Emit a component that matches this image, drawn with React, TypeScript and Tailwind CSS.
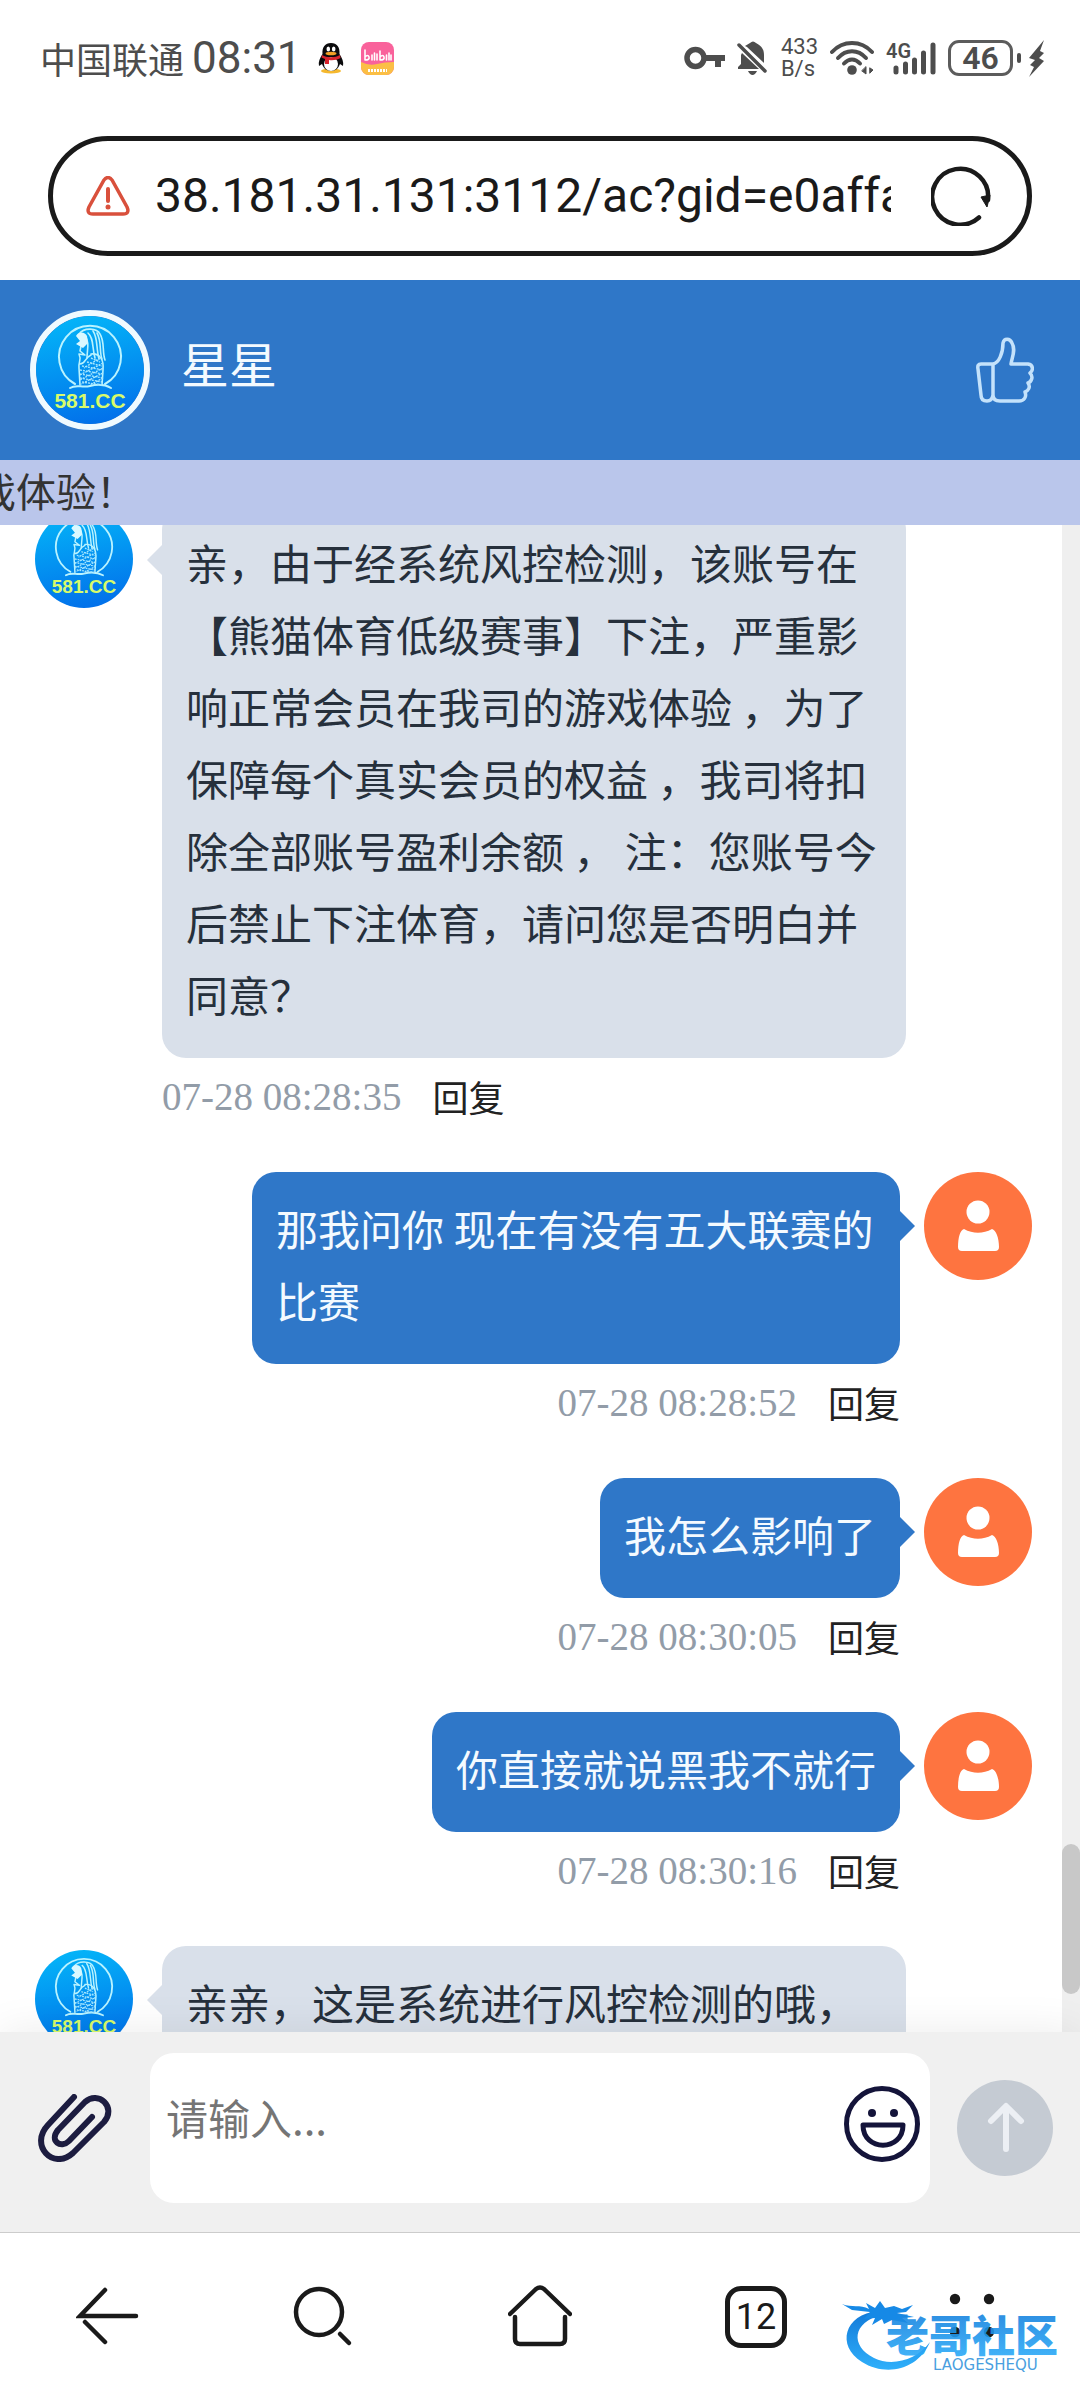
import { useId } from 'react';

type Message = {
  from: 'service' | 'me';
  text: string;
  time: string;
};

const messages: Message[] = [
  {
    from: 'service',
    text: '亲，由于经系统风控检测，该账号在【熊猫体育低级赛事】下注，严重影响正常会员在我司的游戏体验 ，为了保障每个真实会员的权益 ，我司将扣除全部账号盈利余额 ， 注：您账号今后禁止下注体育，请问您是否明白并同意？',
    time: '07-28 08:28:35',
  },
  { from: 'me', text: '那我问你 现在有没有五大联赛的比赛', time: '07-28 08:28:52' },
  { from: 'me', text: '我怎么影响了', time: '07-28 08:30:05' },
  { from: 'me', text: '你直接就说黑我不就行', time: '07-28 08:30:16' },
  { from: 'service', text: '亲亲，这是系统进行风控检测的哦，', time: '07-28 08:31:02' },
];

/* Merlion badge used as the service avatar */
const ServiceLogo = ({ className }: { className: string }) => {
  const id = useId();
  return (
    <svg viewBox="0 0 108 108" className={className} aria-hidden="true">
      <defs>
        <linearGradient id={id} x1="0.4" y1="0" x2="0.6" y2="1">
          <stop offset="0" stopColor="#04b4f8" />
          <stop offset="1" stopColor="#0270ea" />
        </linearGradient>
      </defs>
      <circle cx="54" cy="54" r="54" fill={`url(#${id})`} />
      <g fill="none" stroke="#b9f3ff" strokeWidth="1.6" strokeLinecap="round" strokeLinejoin="round">
        <path d="M39 68A31 31 0 1 1 69 68" strokeWidth="2" />
        <path d="M34 72C40 68 46 72 54 70S68 68 75 72" strokeWidth="2" />
        <path d="M43 18C48 11 61 12 64 18C69 26 66 36 69 44M52 17C58 22 56 32 59 42M57 15C62 22 60 32 63 43M49 20C54 27 51 33 51 42M61 17C66 26 63 35 66 43" />
        <path d="M45 30L44 35L49 39L43 38C46 44 42 46 43 52L44 69M55 38C64 37 68 44 67 54L66 69M44 48C50 48 48 42 55 39" />
      </g>
      <path d="M40 20C43 15 49 16 51 20L52 27L47 32L40 28L44 25Z" fill="#d9f8ff" />
      <path
        d="M55 42L64 46M51 46L66 50M46 50L67 54M44 54L67 58M44 58L67 62M44 62L66 66M46 66L66 69M64 42L48 52M67 47L44 59M67 52L44 64M67 57L45 68M67 62L54 69"
        fill="none"
        stroke="#a5e6ff"
        strokeWidth="1.4"
        strokeDasharray="2 1"
      />
      <text
        x="54"
        y="92"
        textAnchor="middle"
        fill="#d8fb6a"
        fontSize="21"
        fontWeight="700"
        fontFamily="'Liberation Sans', sans-serif"
      >
        581.CC
      </text>
    </svg>
  );
};

const UserAvatar = () => (
  <svg viewBox="0 0 108 108" className="size-[108px] shrink-0" aria-hidden="true">
    <circle cx="54" cy="54" r="54" fill="#fe7440" />
    <circle cx="54" cy="40" r="11.5" fill="#fff" />
    <path d="M40 57C49 62 59 62 68 57C72 58 75 66 75 75Q75 79 71 79H38Q34 79 34 75C34 66 36 58 40 57Z" fill="#fff" />
  </svg>
);

const StatusBar = () => (
  <div className="flex h-[116px] shrink-0 items-center justify-between pr-9 pl-10 text-[#4d4d4d]">
    <div className="flex items-center">
      <span className="text-[36px]">中国联通</span>
      <span className="ml-2 font-['Roboto'] text-[44px]">08:31</span>
      {/* QQ penguin */}
      <svg viewBox="0 0 26 32" className="ml-4 h-8 w-[26px]" aria-hidden="true">
        <ellipse cx="13" cy="29" rx="10" ry="2.5" fill="#f5b82e" />
        <path d="M13 1C7 1 4 5 4.500 12C2 16 0 20 1 24L4 22C6 27 9 29 13 29S20 27 22 22L25 24C26 20 24 16 21.500 12C22 5 19 1 13 1Z" fill="#0b0b0d" />
        <ellipse cx="13" cy="22" rx="7" ry="7" fill="#fff" />
        <ellipse cx="10.300" cy="7" rx="1.800" ry="2.500" fill="#fff" />
        <ellipse cx="15.700" cy="7" rx="1.800" ry="2.500" fill="#fff" />
        <ellipse cx="13" cy="11.500" rx="5.500" ry="1.800" fill="#f3a126" />
        <path d="M4 13C9 16 17 16 22 13L22.500 16C19 18 15 18.500 11 18V22H7V17L3.500 15.500Z" fill="#d8242e" />
      </svg>
      <svg viewBox="0 0 33 33" className="ml-[17px] size-[33px]" aria-hidden="true">
        <defs>
          <clipPath id="app-clip">
            <rect width="33" height="33" rx="8" />
          </clipPath>
        </defs>
        <g clipPath="url(#app-clip)">
          <rect width="33" height="33" fill="#f9629b" />
          <path d="M0 20Q8 24 16 22T33 20V33H0Z" fill="#fbbf45" />
          <g fill="none" stroke="#fff" strokeWidth="1.600" strokeLinecap="round">
            <path d="M4 8V18M4 15Q7 12 8 15T4 18M11 13V18M13.500 11V18M16 12V18M19 9V18M19 15Q22 12 23 15T19 18M25.500 13V18M28 11V18M30 13V18" />
          </g>
          <path d="M7 28.500H26" stroke="#fff" strokeWidth="3" strokeDasharray="2 1" />
        </g>
      </svg>
    </div>

    <div className="flex items-center">
      {/* VPN key */}
      <svg viewBox="0 0 41 24" className="h-6 w-[41px]" fill="none" stroke="#4d4d4d" aria-hidden="true">
        <circle cx="11.500" cy="12" r="8.500" strokeWidth="5.500" />
        <path d="M20 12H41M34 12V21" strokeWidth="6" />
      </svg>
      {/* muted bell */}
      <svg viewBox="0 0 30 34" className="ml-3 h-[34px] w-[30px]" aria-hidden="true">
        <path d="M5 12L22 28H1V26L4 23V14ZM8 5L13 2Q16-1 19 2C25 5 27 9 27 14V22L10 6Z" fill="#4d4d4d" />
        <path d="M11 30H20Q18 34 15.500 34T11 30Z" fill="#4d4d4d" />
        <path d="M2 4L28 30" stroke="#4d4d4d" strokeWidth="3.500" strokeLinecap="round" />
      </svg>
      <div className="ml-[14px] flex flex-col font-['Roboto'] text-[22px] leading-[22px]">
        <span>433</span>
        <span>B/s</span>
      </div>
      <svg viewBox="0 0 44 34" className="ml-3 h-[34px] w-11" fill="none" stroke="#4d4d4d" strokeLinecap="round" aria-hidden="true">
        <path d="M2 11C13-1 31-1 42 11" strokeWidth="4" />
        <path d="M8 17C16 8 28 8 36 17" strokeWidth="4" />
        <path d="M14 22.500C19 17 25 17 30 22.500" strokeWidth="4" />
        <circle cx="22" cy="29" r="4.800" fill="#4d4d4d" stroke="none" />
        <path d="M36 26V33L32 30ZM40 27L43 29L40 32Z" fill="#4d4d4d" strokeWidth="1" />
      </svg>
      <svg viewBox="0 0 52 36" className="ml-3 h-9 w-[52px] overflow-visible" fill="none" stroke="#4d4d4d" strokeLinecap="round" aria-hidden="true">
        <text x="0" y="18" fill="#4d4d4d" stroke="none" fontSize="20" fontWeight="600" fontFamily="Roboto, sans-serif">4G</text>
        <path d="M10 28V32M19.500 24V32M28.500 20V32M37.500 13V32M47 5V32" strokeWidth="5" />
      </svg>
      <div className="ml-[10px] flex h-9 w-[65px] items-center justify-center rounded-[11px] border-[3px] border-[#5c5c5c] font-['Roboto'] text-[32px] leading-8 font-semibold">
        46
      </div>
      <div className="ml-1 h-[10px] w-1 rounded-full bg-[#4d4d4d]" />
      <svg viewBox="0 0 15 37" className="ml-2 h-[37px] w-[15px]" fill="#4d4d4d" aria-hidden="true">
        <path d="M15 0L0 18L6 20L1 25L5 27L0 37L15 21L10 18L15 13L11 11Z" />
      </svg>
    </div>
  </div>
);

const AddressBar = () => (
  <form className="mx-12 mt-5 mb-6 flex h-[120px] shrink-0 items-center rounded-full border-[5px] border-[#1a1a1a] pr-9 pl-[33px]">
    <svg viewBox="0 0 44 40" className="h-10 w-11 shrink-0" fill="none" stroke="#d9503c" aria-hidden="true">
      <path d="M18 4Q22-1 26 4L41 31Q44 38 37 38H7Q0 38 3 31Z" strokeWidth="3.500" />
      <path d="M22 13V25" strokeWidth="4" strokeLinecap="round" />
      <circle cx="22" cy="31" r="2.500" fill="#d9503c" stroke="none" />
    </svg>
    <input
      aria-label="网址"
      defaultValue="38.181.31.131:3112/ac?gid=e0affa81"
      className="ml-[25px] min-w-0 flex-1 bg-transparent font-['Roboto'] text-[48px] text-[#1a1a1a] outline-none"
    />
    <button type="button" aria-label="刷新" className="ml-10 shrink-0">
      <svg viewBox="0 0 60 60" className="size-[60px]" fill="none" stroke="#1a1a1a" aria-hidden="true">
        <path d="M48 51.500A28 28 0 1 1 57 34" strokeWidth="4.500" strokeLinecap="round" />
        <path d="M50 31L59 29L56 41Z" fill="#1a1a1a" strokeWidth="1" />
      </svg>
    </button>
  </form>
);

const Bubble = ({ message }: { message: Message }) => {
  const mine = message.from === 'me';
  return (
    <li className={mine ? 'flex items-start justify-end gap-6 pr-[30px]' : 'flex items-start gap-[29px] pl-[35px]'}>
      {!mine && <ServiceLogo className="mt-1 size-[98px] shrink-0" />}
      <div className={mine ? 'flex flex-col items-end' : 'flex flex-col items-start'}>
        <div
          className={
            mine
              ? 'relative max-w-[648px] rounded-3xl bg-[#2f77c8] px-6 pt-5 pb-7 text-[42px] leading-[72px] text-[#f4faff]'
              : 'relative w-[744px] rounded-3xl bg-[#d9e0ea] px-6 pt-5 pb-7 text-[42px] leading-[72px] text-[#26303c]'
          }
        >
          {/* bubble tail */}
          <svg
            viewBox="0 0 15 30"
            className={mine ? 'absolute top-[39px] left-full h-[30px] w-[15px]' : 'absolute top-[39px] right-full h-[30px] w-[15px]'}
            aria-hidden="true"
          >
            {mine ? <path d="M0 0L15 15L0 30Z" fill="#2f77c8" /> : <path d="M15 0L0 15L15 30Z" fill="#d9e0ea" />}
          </svg>
          {message.text}
        </div>
        <div className="flex h-[78px] items-center gap-[31px]">
          <time className="font-['Liberation_Serif'] text-[39px] text-[#929ca8]">{message.time}</time>
          <button type="button" className="pb-[2px] text-[36px] text-[#222]">
            回复
          </button>
        </div>
      </div>
      {mine && <UserAvatar />}
    </li>
  );
};

const Composer = () => (
  <form className="relative flex h-[200px] shrink-0 items-center bg-[#f0f0f0] pr-[27px] pb-2 pl-[38px] shadow-[0_0_40px_rgba(0,0,0,0.08)]">
    <button type="button" aria-label="附件" className="shrink-0">
      <svg viewBox="0 0 74 68" className="h-[68px] w-[74px]" fill="none" stroke="#1c1c40" strokeWidth="6" strokeLinecap="round" strokeLinejoin="round" aria-hidden="true">
        <path d="M36 3L10 31C-9 51 15 77 35 59L66 28C79 13 60-4 47 8L20 36C11 47 23 55 31 47L54 23" />
      </svg>
    </button>
    <div className="ml-[38px] flex h-[150px] flex-1 items-center rounded-3xl bg-white pr-[10px] pb-2 pl-4">
      <input
        aria-label="消息"
        placeholder="请输入..."
        className="min-w-0 flex-1 bg-transparent pb-4 text-[42px] outline-none placeholder:text-[#757575]"
      />
      <button type="button" aria-label="表情" className="shrink-0">
        <svg viewBox="0 0 76 76" className="size-[76px]" fill="none" stroke="#14143a" strokeWidth="5" aria-hidden="true">
          <circle cx="38" cy="38" r="35.500" />
          <circle cx="28" cy="27" r="4" fill="#14143a" stroke="none" />
          <circle cx="50" cy="27" r="4" fill="#14143a" stroke="none" />
          <path d="M19 39H59C59 66 19 66 19 39Z" strokeLinejoin="round" />
        </svg>
      </button>
    </div>
    <button type="submit" aria-label="发送" className="ml-[27px] shrink-0">
      <svg viewBox="0 0 96 96" className="size-24" aria-hidden="true">
        <circle cx="48" cy="48" r="48" fill="#c5cbd3" />
        <path d="M49 69V27M34 41L49 26L64 41" fill="none" stroke="#eceff4" strokeWidth="6" strokeLinecap="round" strokeLinejoin="round" />
      </svg>
    </button>
  </form>
);

const BrowserNav = () => (
  <nav className="relative grid h-[168px] shrink-0 grid-cols-5 items-center justify-items-center border-t border-[#ccc] bg-white">
    <button type="button" aria-label="返回">
      <svg viewBox="0 0 64 64" className="size-16" fill="none" stroke="#1a1a1a" strokeWidth="4.500" strokeLinecap="round" aria-hidden="true">
        <path d="M29 5L4 31H60M9 37L29 57" />
      </svg>
    </button>
    <button type="button" aria-label="搜索">
      <svg viewBox="0 0 64 64" className="size-16" fill="none" stroke="#1a1a1a" strokeWidth="4.500" strokeLinecap="round" aria-hidden="true">
        <circle cx="27" cy="27" r="23" />
        <path d="M48 49L57 58" />
      </svg>
    </button>
    <button type="button" aria-label="主页">
      <svg viewBox="0 0 64 64" className="size-16" fill="none" stroke="#1a1a1a" strokeWidth="4.500" strokeLinecap="round" strokeLinejoin="round" aria-hidden="true">
        <path d="M2 29L28 4Q32 1 36 4L62 29M7 32V54Q7 59 12 59H52Q57 59 57 54V32" />
      </svg>
    </button>
    <button type="button" aria-label="标签页" className="flex size-[62px] items-center justify-center rounded-2xl border-[5px] border-[#1a1a1a] font-['Roboto'] text-[36px] text-[#1a1a1a]">
      12
    </button>
    <button type="button" aria-label="菜单">
      <svg viewBox="0 0 64 64" className="size-16" fill="#1a1a1a" aria-hidden="true">
        <circle cx="15" cy="14" r="5.200" />
        <circle cx="49" cy="14" r="5.200" />
        <circle cx="15" cy="47" r="5.200" />
        <circle cx="49" cy="47" r="5.200" />
      </svg>
    </button>

    {/* community logo laid over the menu button */}
    <svg viewBox="0 0 222 76" className="pointer-events-none absolute right-4 bottom-6 h-[76px] w-[222px] overflow-visible" aria-hidden="true">
      <defs>
        <linearGradient id="logo-blue" x1="0" y1="0" x2="0" y2="1">
          <stop offset="0" stopColor="#1279d8" />
          <stop offset="1" stopColor="#2fb0fb" />
        </linearGradient>
      </defs>
      <path d="M36 11C2 14-6 46 20 62C44 77 76 70 88 42C75 60 50 67 32 58C8 46 10 22 40 15Z" fill="url(#logo-blue)" />
      <path d="M0 4C10 8 18 4 27 9L24 3L33 8L38 1L43 8L52 6L60 9L71 5L64 12L55 13L72 17L60 18L66 23L50 20L42 24L40 19L30 25L33 18L22 19L28 12L10 10Z" fill="#1689e6" />
      <text x="44" y="52" fill="url(#logo-blue)" fillOpacity="0.9" fontSize="43" fontWeight="900" fontFamily="'Noto Sans CJK SC', sans-serif">老哥社区</text>
      <text x="91" y="70" fill="#4a9fe0" fontSize="15" fontFamily="'DejaVu Sans', sans-serif">LAOGESHEQU</text>
    </svg>
  </nav>
);

const App = () => {
  return (
    <div className="flex h-screen flex-col overflow-hidden bg-white font-['Noto_Sans_CJK_SC',sans-serif]">
      <StatusBar />
      <AddressBar />

      <header className="flex h-[180px] shrink-0 items-center bg-[#2f77c8] px-[30px]">
        <ServiceLogo className="size-[120px] rounded-full border-[6px] border-[#f0faff]" />
        <h1 className="ml-[31px] flex-1 pb-4 text-[48px] text-[#f4faff]">星星</h1>
        <button type="button" aria-label="点赞" className="mr-4">
          <svg viewBox="0 0 58 66" className="h-[66px] w-[58px]" fill="none" stroke="#c4e2fb" strokeWidth="3.500" strokeLinecap="round" strokeLinejoin="round" aria-hidden="true">
            <path d="M17 27C23 26 27 16 27 6C28 1 34 1 36 6C40 13 36 20 35 27H52C58 28 57 34 54 36C58 40 55 45 52 46C55 50 52 54 49 55C51 60 48 64 43 64H24Q17 64 17 58V27H5Q1 27 2 32L5 58Q5 64 11 64Q16 64 17 58" />
          </svg>
        </button>
      </header>

      <div className="h-[65px] shrink-0 overflow-hidden bg-[#bac6eb] whitespace-nowrap">
        <p className="-ml-6 text-[40px] leading-[60px] text-[#333]">戏体验！</p>
      </div>

      <main className="flex min-h-0 flex-1 overflow-hidden">
        <ul className="-mt-[19px] flex min-w-0 flex-1 flex-col gap-9">
          {messages.map((message) => (
            <Bubble key={message.time} message={message} />
          ))}
        </ul>
        {/* scroll track */}
        <div className="flex w-[18px] shrink-0 flex-col justify-end bg-[#efefef] pb-[38px]">
          <div className="h-[150px] rounded-full bg-[#c8c8c8]" />
        </div>
      </main>

      <Composer />
      <BrowserNav />
    </div>
  );
};

export default App;
